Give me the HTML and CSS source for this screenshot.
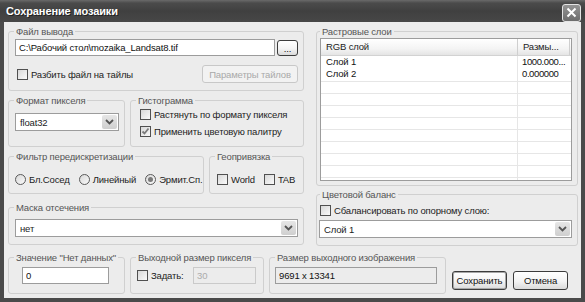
FILE: index.html
```html
<!DOCTYPE html>
<html lang="ru">
<head>
  <meta charset="UTF-8" />
  <title>Сохранение мозаики</title>
  <link rel="stylesheet" href="styles.css">
</head>
<body>
<div class="window">
  <div class="titlebar">
    <span class="title">Сохранение мозаики</span>
    <button class="close" title="Закрыть">
      <svg width="11" height="11" viewBox="0 0 11 11"><path d="M1.5 1.5l8 8M9.5 1.5l-8 8" stroke="#fff" stroke-width="2" fill="none"/></svg>
    </button>
  </div>

  <div class="client">
    <div class="top">
      <div class="col-left">
        <fieldset class="group file">
          <legend>Файл вывода</legend>
          <div class="path-row">
            <input class="text path" type="text" value="C:\Рабочий стол\mozaika_Landsat8.tif">
            <button class="btn browse">...</button>
          </div>
          <div class="tiles-row">
            <label class="check"><span class="box"></span>Разбить файл на тайлы</label>
            <button class="btn tiles" disabled>Параметры тайлов</button>
          </div>
        </fieldset>

        <div class="pair">
          <fieldset class="group format">
            <legend>Формат пикселя</legend>
            <div class="combo">
              <span class="value">float32</span>
              <span class="drop"><svg width="9" height="6" viewBox="0 0 9 6"><path d="M1 1l3.5 3.5L8 1" stroke="#555" stroke-width="1.8" fill="none"/></svg></span>
            </div>
          </fieldset>
          <fieldset class="group hist">
            <legend>Гистограмма</legend>
            <label class="check"><span class="box"></span>Растянуть по формату пикселя</label>
            <label class="check"><span class="box"><svg width="9" height="9" viewBox="0 0 9 9"><path d="M1.5 4.5l2 2 4-5" stroke="#7c7c7c" stroke-width="1.8" fill="none"/></svg></span>Применить цветовую палитру</label>
          </fieldset>
        </div>

        <div class="pair">
          <fieldset class="group filter">
            <legend>Фильтр передискретизации</legend>
            <div class="radios">
              <label class="radio"><span class="dot"></span>Бл.Сосед</label>
              <label class="radio"><span class="dot"></span>Линейный</label>
              <label class="radio"><span class="dot on"></span>Эрмит.Сп.</label>
            </div>
          </fieldset>
          <fieldset class="group geo">
            <legend>Геопривязка</legend>
            <div class="geo-row">
              <label class="check"><span class="box"></span>World</label>
              <label class="check"><span class="box"></span>TAB</label>
            </div>
          </fieldset>
        </div>

        <fieldset class="group mask">
          <legend>Маска отсечения</legend>
          <div class="combo">
            <span class="value">нет</span>
            <span class="drop"><svg width="9" height="6" viewBox="0 0 9 6"><path d="M1 1l3.5 3.5L8 1" stroke="#555" stroke-width="1.8" fill="none"/></svg></span>
          </div>
        </fieldset>
      </div>

      <div class="col-right">
        <fieldset class="group layers">
          <legend>Растровые слои</legend>
          <div class="list">
            <div class="list-head">
              <div class="cell first">RGB слой</div>
              <div class="cell second">Размы...</div>
            </div>
            <div class="list-body">
              <div class="list-row"><div class="cell first">Слой 1</div><div class="cell second">1000.000...</div></div>
              <div class="list-row"><div class="cell first">Слой 2</div><div class="cell second">0.000000</div></div>
              <div class="filler"></div>
            </div>
          </div>
        </fieldset>

        <fieldset class="group balance">
          <legend>Цветовой баланс</legend>
          <label class="check"><span class="box"></span>Сбалансировать по опорному слою:</label>
          <div class="combo">
            <span class="value">Слой 1</span>
            <span class="drop"><svg width="9" height="6" viewBox="0 0 9 6"><path d="M1 1l3.5 3.5L8 1" stroke="#555" stroke-width="1.8" fill="none"/></svg></span>
          </div>
        </fieldset>
      </div>
    </div>

    <div class="bottom">
      <fieldset class="group nodata">
        <legend>Значение "Нет данных"</legend>
        <input class="text" type="text" value="0">
      </fieldset>
      <fieldset class="group pixsize">
        <legend>Выходной размер пикселя</legend>
        <div class="pix-row">
          <label class="check"><span class="box"></span>Задать:</label>
          <input class="text" type="text" value="30" disabled>
        </div>
      </fieldset>
      <fieldset class="group outsize">
        <legend>Размер выходного изображения</legend>
        <input class="text" type="text" value="9691 x 13341" readonly>
      </fieldset>
      <div class="actions">
        <button class="btn default">Сохранить</button>
        <button class="btn">Отмена</button>
      </div>
    </div>
  </div>
</div>
</body>
</html>
```

FILE: styles.css
```css
body {
  margin: 0;
  font-family: "Liberation Sans", Arial, sans-serif;
  font-size: 9.5px;
  letter-spacing: -0.15px;
  color: #1c1c1c;
  background: #fff;
}
.window {
  width: 585px;
  height: 302px;
  background: #4a4a4a;
  display: flex;
  flex-direction: column;
}
.titlebar {
  height: 22px;
  display: flex;
  align-items: center;
  justify-content: space-between;
  padding: 0 4px 0 6px;
  background: linear-gradient(#6a6a6a, #4b4b4b 3px, #404040 50%, #474747);
  color: #fff;
}
.title {
  font-weight: bold;
  font-size: 11px;
  letter-spacing: -0.1px;
  text-shadow: 1px 1px 0 #222;
}
.close {
  width: 19px;
  height: 18px;
  padding: 0;
  margin-top: 3px;
  border: 1px solid #e4e4e4;
  border-radius: 3px;
  background: linear-gradient(#949494, #6c6c6c);
  display: flex;
  align-items: center;
  justify-content: center;
}
.client {
  flex: 1;
  margin: 0 4px 4px;
  padding: 3px 3px 0 4px;
  background: #ececec;
}

/* group boxes */
.group {
  margin: 0;
  padding: 0 5px 7px;
  border: 1px solid #d0d0d0;
  border-radius: 3px;
  min-width: 0;
}
.group legend {
  padding: 0 2px;
  line-height: 13px;
  color: #555;
  white-space: nowrap;
}
.top {
  display: flex;
  gap: 12px;
}
.col-left {
  width: 296px;
  display: flex;
  flex-direction: column;
}
.col-right {
  width: 262px;
  display: flex;
  flex-direction: column;
}
.pair {
  display: flex;
  gap: 5px;
  margin-top: 3px;
}

/* controls */
.text {
  height: 17px;
  box-sizing: border-box;
  border: 1px solid #9c9c9c;
  padding: 0 3px;
  font: inherit;
  letter-spacing: inherit;
  color: #111;
  background: #fff;
  outline: none;
}
.text:disabled {
  border-color: #cacaca;
  background: #ececec;
  color: #ababab;
}
.text[readonly] {
  background: #ececec;
}
.btn {
  height: 19px;
  padding: 0;
  font: inherit;
  letter-spacing: inherit;
  color: #111;
  border: 1px solid #3c3c3c;
  border-radius: 3px;
  background: linear-gradient(#fff, #f3f3f3 55%, #dadada);
}
.btn:disabled {
  border-color: #c8c8c8;
  background: #f2f2f2;
  color: #a9a9a9;
}
.btn.default {
  box-shadow: inset 0 0 0 1px #a8a8a8;
}
.check, .radio {
  display: flex;
  align-items: center;
  gap: 3px;
  height: 14px;
  white-space: nowrap;
}
.box {
  width: 11px;
  height: 11px;
  flex: none;
  box-sizing: border-box;
  border: 1px solid #505050;
  background: linear-gradient(135deg, #d8d8d8, #fafafa);
  display: flex;
  align-items: center;
  justify-content: center;
}
.dot {
  width: 11px;
  height: 11px;
  flex: none;
  box-sizing: border-box;
  border: 1px solid #5a5a5a;
  border-radius: 50%;
  background: linear-gradient(135deg, #d8d8d8, #fafafa);
  display: flex;
  align-items: center;
  justify-content: center;
}
.dot.on::after {
  content: "";
  width: 5px;
  height: 5px;
  border-radius: 50%;
  background: #7a7a7a;
}
.combo {
  height: 18px;
  box-sizing: border-box;
  border: 1px solid #9c9c9c;
  background: #fff;
  display: flex;
  align-items: center;
  padding: 1px;
}
.combo .value {
  flex: 1;
  padding-left: 3px;
}
.combo .drop {
  width: 15px;
  height: 14px;
  border-radius: 2px;
  background: linear-gradient(#e6e6e6, #cfcfcf);
  display: flex;
  align-items: center;
  justify-content: center;
}

/* file group */
.path-row {
  display: flex;
  gap: 2px;
  margin: 1px 0 0 1px;
}
.path {
  flex: 1;
  min-width: 0;
}
.browse {
  width: 21px;
  height: 16px;
  margin-top: 1px;
}
.tiles-row {
  display: flex;
  justify-content: space-between;
  align-items: center;
  margin-top: 9px;
  height: 18px;
}
.tiles-row .check {
  margin-left: 3px;
}
.tiles {
  width: 96px;
  height: 18px;
}

.format {
  width: 117px;
  box-sizing: border-box;
  padding-bottom: 14px;
}
.format .combo {
  margin: 6px 0 0 1px;
}
.hist {
  flex: 1;
  padding-bottom: 8px;
}
.hist .check {
  margin-left: 4px;
}
.hist .check + .check {
  margin-top: 3px;
}

.filter {
  width: 196px;
  box-sizing: border-box;
}
.radios {
  display: flex;
  gap: 9px;
  margin: 9px 0 0 1px;
}
.geo {
  flex: 1;
}
.geo-row {
  display: flex;
  gap: 9px;
  margin: 9px 0 0 2px;
}

.mask {
  margin-top: 7px;
}
.mask .combo {
  margin: 5px 0 0 1px;
}

/* raster layers */
.layers {
  padding: 0 5px 4px 3px;
}
.list {
  height: 143px;
  box-sizing: border-box;
  border: 1px solid #9c9c9c;
  background: #fff;
  display: flex;
  flex-direction: column;
}
.list-head {
  display: flex;
  height: 16px;
  border-bottom: 1px solid #d2d2d2;
  background: linear-gradient(#fff, #f4f4f4 60%, #e4e4e4);
}
.list-head .cell {
  line-height: 16px;
  border-right: 1px solid #cfcfcf;
}
.list-head .first {
  padding-left: 7px;
}
.cell {
  box-sizing: border-box;
  white-space: nowrap;
}
.cell.first {
  width: 197px;
  padding-left: 5px;
}
.cell.second {
  width: 52px;
  padding-left: 5px;
}
.list-body {
  flex: 1;
  display: flex;
  flex-direction: column;
  background: linear-gradient(to right, transparent 196px, #e6e6e6 196px, #e6e6e6 197px, transparent 197px);
}
.list-row {
  display: flex;
  height: 12px;
  line-height: 12px;
  color: #111;
}
.list-row .second {
  padding-left: 4px;
  letter-spacing: -0.4px;
}
.filler {
  flex: 1;
  background: repeating-linear-gradient(transparent 0, transparent 1px, #e6e6e6 1px, #e6e6e6 2px, transparent 2px, transparent 12px);
}

.balance {
  margin-top: 2px;
  padding-left: 3px;
}
.balance .check {
  margin: 2px 0 0 0;
}
.balance .combo {
  margin: 3px 0 0 -1px;
}

/* bottom row */
.bottom {
  display: flex;
  gap: 5px;
  margin-top: 5px;
}
.bottom .group {
  box-sizing: border-box;
  padding-bottom: 9px;
}
.nodata {
  width: 117px;
}
.nodata .text {
  width: 87px;
  margin: 3px 0 0 8px;
}
.pixsize {
  width: 134px;
}
.pix-row {
  display: flex;
  align-items: center;
  justify-content: space-between;
  margin: 3px 2px 0 1px;
}
.pix-row .text {
  width: 63px;
}
.outsize {
  width: 177px;
}
.outsize .text {
  width: 162px;
  margin-top: 3px;
}
.actions {
  display: flex;
  gap: 6px;
  padding-top: 20px;
  margin-left: 1px;
}
.actions .btn {
  width: 55px;
}
```
